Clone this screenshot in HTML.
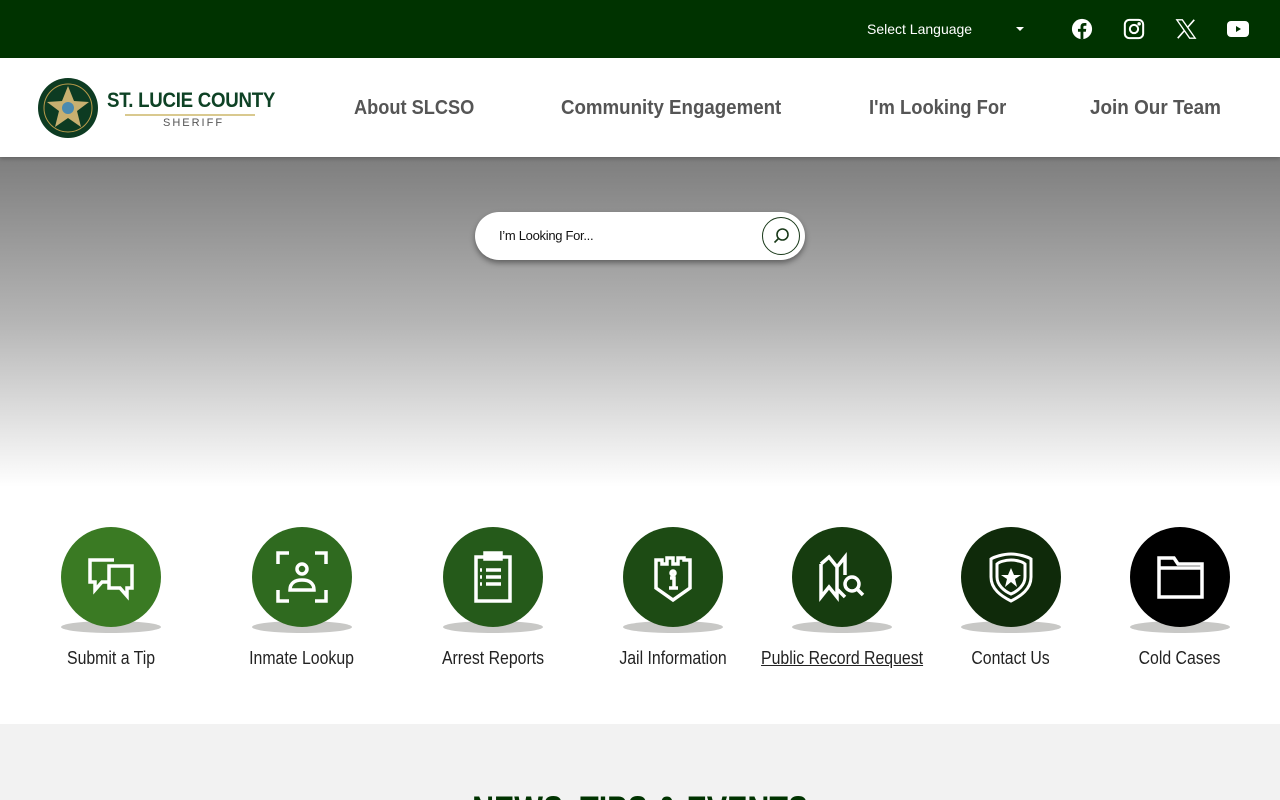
<!DOCTYPE html>
<html><head><meta charset="utf-8"><style>
*{margin:0;padding:0;box-sizing:border-box}
html,body{width:1280px;height:800px;overflow:hidden}
body{font-family:"Liberation Sans",sans-serif;background:#fff;position:relative}
.top{position:absolute;left:0;top:0;width:1280px;height:58px;background:#003300}
.lang{position:absolute;left:867px;top:21px;color:#fff;font-size:14px}
.caret{position:absolute;left:1016px;top:27px;border-left:4px solid transparent;border-right:4px solid transparent;border-top:4px solid #fff}
.soc{position:absolute;top:18px}
.hdr{position:absolute;top:58px;left:0;width:1280px;height:99px;background:#fff;box-shadow:0 2px 4px rgba(0,0,0,.2);z-index:2}
.nav{position:absolute;top:97px;font-size:20px;font-weight:bold;color:#555;transform-origin:left top;white-space:nowrap}
.hero{position:absolute;top:157px;left:0;width:1280px;height:330px;background:linear-gradient(#7e7e7e,#b5b5b5 50%,#fff)}
.search{position:absolute;left:475px;top:212px;width:330px;height:48px;background:#fff;border-radius:24px;box-shadow:0 3px 6px rgba(0,0,0,.4)}
.search span{position:absolute;left:24px;top:16px;font-size:13px;color:#111;letter-spacing:-.3px}
.sbtn{position:absolute;left:287px;top:5px;width:38px;height:38px;border:1px solid #1a3a1a;border-radius:50%}
.it{position:absolute;top:527px;width:100px;text-align:center}
.c{width:100px;height:100px;border-radius:50%;position:relative;z-index:1;display:flex;align-items:center;justify-content:center}
.sh{position:absolute;top:94px;left:0;width:100px;height:12px;border-radius:50%;background:#c8c8c6}
.lb{position:absolute;top:121px;left:-50px;width:200px;text-align:center;font-size:18px;color:#222;white-space:nowrap}
.lb span{display:inline-block;transform:scaleX(.88)}
.gray{position:absolute;top:724px;left:0;width:1280px;height:76px;background:#f2f2f2}
.h2{position:absolute;top:789px;left:0;width:1280px;text-align:center;font-size:40px;font-weight:bold;color:#003300}
.h2 span{display:inline-block;transform:scaleX(.76)}
</style></head><body>
<div class="top">
<div class="lang">Select Language</div><div class="caret"></div>
<svg class="soc" style="left:1071px" width="22" height="22" viewBox="0 0 24 24"><circle cx="12" cy="12" r="11" fill="#fff"/><path d="M13.5 23v-8h2.7l.4-3.2h-3.1V9.9c0-.9.3-1.5 1.6-1.5h1.7V5.5c-.3 0-1.3-.1-2.4-.1-2.4 0-4 1.5-4 4.1v2.3H7.6V15h2.8v8z" fill="#003300"/></svg>
<svg class="soc" style="left:1123px" width="22" height="22" viewBox="0 0 24 24" fill="none" stroke="#fff" stroke-width="2.2"><rect x="2" y="2" width="20" height="20" rx="5"/><circle cx="12" cy="12" r="4.5"/><circle cx="17.6" cy="6.4" r=".8" fill="#fff"/></svg>
<svg class="soc" style="left:1175px" width="22" height="22" viewBox="0 0 24 24"><path d="M2 2h6l14 20h-6z" fill="none" stroke="#fff" stroke-width="1.5"/><path d="M21 2L13.5 10.5M3 22l7.5-8.5" stroke="#fff" stroke-width="1.8"/></svg>
<svg class="soc" style="left:1227px;top:20px" width="22" height="18" viewBox="0 0 22 16"><rect width="22" height="16" rx="4" fill="#fff"/><path d="M9 5l5 3-5 3z" fill="#003300"/></svg>
</div>
<div class="hdr">
<svg style="position:absolute;left:37px;top:19px" width="62" height="62" viewBox="0 0 62 62"><circle cx="31" cy="31" r="30" fill="#0d3b22"/><circle cx="31" cy="31" r="24" fill="none" stroke="#b89a4a" stroke-width="1"/><path d="M31 9l6 15 15 1-12 9 4 16-13-9-13 9 4-16-12-9 15-1z" fill="#c8b070"/><circle cx="31" cy="31" r="6" fill="#4a8ab0"/></svg>
<div style="position:absolute;left:107px;top:31px;font-size:21px;font-weight:bold;color:#0e4225;letter-spacing:-.3px;transform:scaleX(.89);transform-origin:left top;white-space:nowrap">ST. LUCIE COUNTY</div>
<div style="position:absolute;left:125px;top:56px;width:130px;height:1.5px;background:#d9c98f"></div>
<div style="position:absolute;left:163px;top:59px;font-size:11px;color:#555;letter-spacing:2px">SHERIFF</div>
</div>
<div class="nav" style="left:354px;z-index:3;transform:scaleX(.91)">About SLCSO</div>
<div class="nav" style="left:561px;z-index:3;transform:scaleX(.935)">Community Engagement</div>
<div class="nav" style="left:869px;z-index:3;transform:scaleX(.92)">I'm Looking For</div>
<div class="nav" style="left:1090px;z-index:3;transform:scaleX(.945)">Join Our Team</div>
<div class="hero"></div>
<div class="search"><span>I’m Looking For...</span><div class="sbtn"><svg width="36" height="36" viewBox="0 0 36 36" fill="none" stroke="#1a3a1a" stroke-width="1.6"><circle cx="19.5" cy="16.5" r="5.5"/><path d="M15.5 20.5l-4 4"/></svg></div></div>

<div class="it" style="left:61px"><div class="c" style="background:#3a7a23"><svg width="54" height="54" viewBox="0 0 54 54" fill="none" stroke="#fff" stroke-width="3.5"><path d="M30 10H6v22h5v8l7-8h6"/><path d="M25 16h23v22h-5v8l-7-8H25z"/></svg></div><div class="sh"></div><div class="lb"><span>Submit a Tip</span></div></div>
<div class="it" style="left:252px"><div class="c" style="background:#2f6a1f"><svg width="54" height="54" viewBox="0 0 54 54" fill="none" stroke="#fff" stroke-width="3.5"><path d="M3 14V3h11M40 3h11v11M3 40v11h11M51 40v11H40"/><circle cx="27" cy="19" r="5"/><path d="M15 40c0-7 5-10 12-10s12 3 12 10z"/></svg></div><div class="sh"></div><div class="lb"><span>Inmate Lookup</span></div></div>
<div class="it" style="left:443px"><div class="c" style="background:#255a1a"><svg width="54" height="54" viewBox="0 0 54 54" fill="none" stroke="#fff" stroke-width="3.5"><rect x="10" y="7" width="34" height="44"/><rect x="19" y="3" width="16" height="6" fill="#fff"/><path d="M20 20h15M20 27h15M20 34h15" /><path d="M14 20h2M14 27h2M14 34h2"/></svg></div><div class="sh"></div><div class="lb"><span>Arrest Reports</span></div></div>
<div class="it" style="left:623px"><div class="c" style="background:#1d4b14"><svg width="54" height="54" viewBox="0 0 54 54" fill="none" stroke="#fff" stroke-width="3.5"><path d="M10 10h6v4h5v-6h6v6h5V8h6v2h6v28L27 50 10 38z"/><circle cx="27" cy="23" r="2" /><path d="M24 28h4v10M23 38h9"/></svg></div><div class="sh"></div><div class="lb"><span>Jail Information</span></div></div>
<div class="it" style="left:792px"><div class="c" style="background:#163c0f"><svg width="54" height="54" viewBox="0 0 54 54" fill="none" stroke="#fff" stroke-width="3.5"><path d="M6 14l8-7 8 10 8-10v18M22 17v30l-8-10-8 10V14M30 47l-8-8"/><circle cx="37" cy="34" r="7"/><path d="M42 39l6 6"/></svg></div><div class="sh"></div><div class="lb"><span style="text-decoration:underline">Public Record Request</span></div></div>
<div class="it" style="left:961px"><div class="c" style="background:#0f2a0a"><svg width="54" height="54" viewBox="0 0 54 54" fill="none" stroke="#fff" stroke-width="3"><path d="M27 4c8 0 17 3 20 5v18c0 12-10 19-20 24C17 46 7 39 7 27V9c3-2 12-5 20-5z"/><path d="M27 10c6 0 12 2 14 4v13c0 8-7 14-14 17-7-3-14-9-14-17V14c2-2 8-4 14-4z"/><path d="M27 18l3 7h7l-6 4 2 8-6-5-6 5 2-8-6-4h7z" fill="#fff" stroke="none"/></svg></div><div class="sh"></div><div class="lb"><span>Contact Us</span></div></div>
<div class="it" style="left:1130px"><div class="c" style="background:#000"><svg width="54" height="54" viewBox="0 0 54 54" fill="none" stroke="#fff" stroke-width="3.5"><path d="M6 8h15l4 6h24v33H6z"/><path d="M6 18h43"/></svg></div><div class="sh"></div><div class="lb"><span>Cold Cases</span></div></div>

<div class="gray"></div>
<div class="h2"><span>NEWS, TIPS &amp; EVENTS</span></div>
</body></html>
